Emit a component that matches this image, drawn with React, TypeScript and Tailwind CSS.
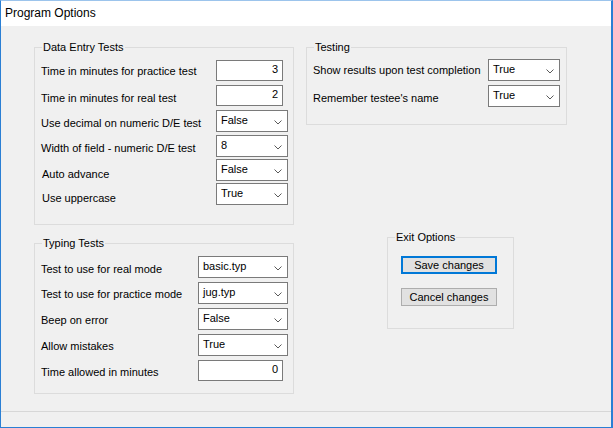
import React from "react";

type Row = {
  label: string;
  kind: "input" | "select";
  value: string;
  rowClass: string;
  labelClass: string;
};

const DATA_ENTRY_ROWS: Row[] = [
  { label: "Time in minutes for practice test", kind: "input", value: "3", rowClass: "mt-0", labelClass: "mt-[5px]" },
  { label: "Time in minutes for real test", kind: "input", value: "2", rowClass: "mt-[4px]", labelClass: "mt-[7px]" },
  { label: "Use decimal on numeric D/E test", kind: "select", value: "False", rowClass: "mt-[4px]", labelClass: "mt-[7px]" },
  { label: "Width of field - numeric D/E test", kind: "select", value: "8", rowClass: "mt-[3px]", labelClass: "mt-[7px]" },
  { label: "Auto advance", kind: "select", value: "False", rowClass: "mt-[2px]", labelClass: "mt-[9px] pl-[1px]" },
  { label: "Use uppercase", kind: "select", value: "True", rowClass: "mt-[2px]", labelClass: "mt-[9px] pl-[1px]" },
];

const TYPING_ROWS: Row[] = [
  { label: "Test to use for real mode", kind: "select", value: "basic.typ", rowClass: "mt-0", labelClass: "mt-[7px]" },
  { label: "Test to use for practice mode", kind: "select", value: "jug.typ", rowClass: "mt-[4px]", labelClass: "mt-[6px]" },
  { label: "Beep on error", kind: "select", value: "False", rowClass: "mt-[4px]", labelClass: "mt-[6px]" },
  { label: "Allow mistakes", kind: "select", value: "True", rowClass: "mt-[4px]", labelClass: "mt-[6px]" },
  { label: "Time allowed in minutes", kind: "input", value: "0", rowClass: "mt-[4px]", labelClass: "mt-[6px]" },
];

const TESTING_ROWS: Row[] = [
  { label: "Show results upon test completion", kind: "select", value: "True", rowClass: "mt-0", labelClass: "mt-[5px]" },
  { label: "Remember testee's name", kind: "select", value: "True", rowClass: "mt-[4px]", labelClass: "mt-[7px]" },
];

function Chevron() {
  return (
    <svg width="8" height="5" viewBox="0 0 8 5" className="shrink-0 mt-[2px]">
      <polyline points="0.5,0.5 4,4 7.5,0.5" fill="none" stroke="#5a5a5a" strokeWidth="1" />
    </svg>
  );
}

function ComboBox({ value, width }: { value: string; width: string }) {
  return (
    <div className={`${width} h-[22px] bg-white border border-[#7a7a7a] flex items-center justify-between pl-[4px] pr-[5px]`}>
      <span className="leading-[13px] pb-[2px]">{value}</span>
      <Chevron />
    </div>
  );
}

function TextBox({ value, width }: { value: string; width: string }) {
  return (
    <div className={`${width} h-[21px] bg-white border border-[#7a7a7a] flex items-center justify-end pr-[4px]`}>
      <span className="leading-[13px] pb-[2px]">{value}</span>
    </div>
  );
}

function GroupBox({
  title,
  className,
  children,
}: {
  title: string;
  className: string;
  children: React.ReactNode;
}) {
  return (
    <fieldset className={`border border-[#dcdcdc] ${className}`}>
      <legend className="ml-[7px] px-[1px] leading-[13px] text-[11px]">{title}</legend>
      {children}
    </fieldset>
  );
}

function OptionRows({
  rows,
  labelWidth,
  inputWidth,
  selectWidth,
}: {
  rows: Row[];
  labelWidth: string;
  inputWidth: string;
  selectWidth: string;
}) {
  return (
    <div className="flex flex-col">
      {rows.map((row) => (
        <div key={row.label} className={`flex items-start ${row.rowClass}`}>
          <div className={`${labelWidth} shrink-0 leading-[13px] ${row.labelClass}`}>{row.label}</div>
          {row.kind === "input" ? (
            <TextBox value={row.value} width={inputWidth} />
          ) : (
            <ComboBox value={row.value} width={selectWidth} />
          )}
        </div>
      ))}
    </div>
  );
}

export default function App() {
  return (
    <div
      className="w-[613px] h-[428px] flex flex-col border-t border-l border-b border-r-2 border-t-[#9cc4ec] border-l-[#2a7fd4] border-r-[#2a7fd4] border-b-[#2a7fd4] text-[11px] text-black overflow-hidden"
      style={{ fontFamily: '"Liberation Sans", Arial, sans-serif' }}
    >
      {/* title bar */}
      <div className="h-[25px] shrink-0 bg-white flex items-center pl-[4px]">
        <span className="text-[12px] leading-[15px]">Program Options</span>
      </div>

      {/* body */}
      <div className="flex-1 bg-[#f0f0f0] flex pl-[33px] pt-[15px]">
        <div className="flex flex-col w-[260px]">
          <GroupBox title="Data Entry Tests" className="h-[184px]">
            <div className="mt-[6px] pl-[6px]">
              <OptionRows rows={DATA_ENTRY_ROWS} labelWidth="w-[175px]" inputWidth="w-[67px]" selectWidth="w-[72px]" />
            </div>
          </GroupBox>
          <GroupBox title="Typing Tests" className="mt-[12px] h-[157px]">
            <div className="mt-[6px] pl-[6px]">
              <OptionRows rows={TYPING_ROWS} labelWidth="w-[157px]" inputWidth="w-[85px]" selectWidth="w-[90px]" />
            </div>
          </GroupBox>
        </div>

        <div className="flex flex-col ml-[12px] w-[261px]">
          <GroupBox title="Testing" className="h-[84px]">
            <div className="mt-[5px] pl-[6px]">
              <OptionRows rows={TESTING_ROWS} labelWidth="w-[175px]" inputWidth="w-[67px]" selectWidth="w-[72px]" />
            </div>
          </GroupBox>
          <GroupBox title="Exit Options" className="mt-[106px] ml-[81px] w-[127px] h-[98px]">
            <div className="mt-[12px] pl-[13px] flex flex-col">
              <button className="w-[96px] h-[18px] bg-[#e1e1e1] border-2 border-[#0078d7] leading-[13px] flex items-center justify-center">
                Save changes
              </button>
              <button className="mt-[14px] w-[96px] h-[18px] bg-[#e1e1e1] border border-[#adadad] leading-[13px] flex items-center justify-center">
                Cancel changes
              </button>
            </div>
          </GroupBox>
        </div>
      </div>

      {/* status bar */}
      <div className="h-[16px] shrink-0 bg-[#f0f0f0] border-t border-[#d7d7d7]" />
    </div>
  );
}
